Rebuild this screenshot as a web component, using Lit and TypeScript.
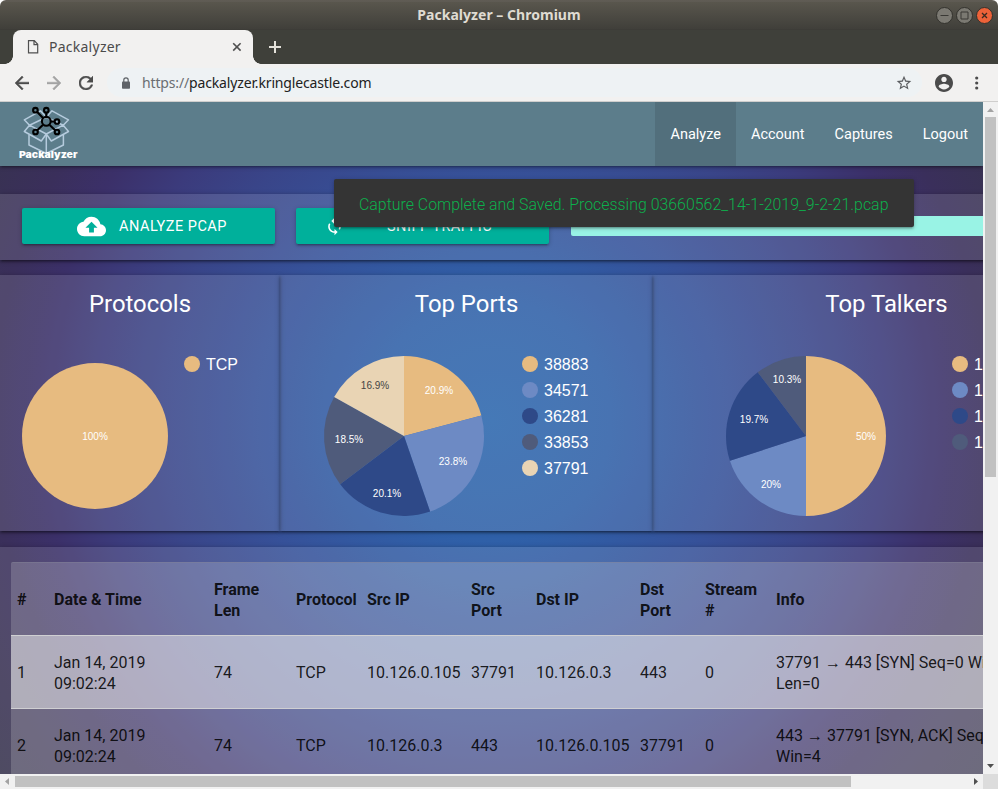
import { LitElement, html, svg, css } from "lit";
import { customElement, property } from "lit/decorators.js";

const GOLD = "#e7bb80";
const SKY = "#6d8ac4";
const NAVY = "#2e4988";
const SLATE = "#4f5b7b";
const SAND = "#e9d4b4";

interface Slice {
  name: string;
  value: number;
  color: string;
  label: string;
  x: number;
  y: number;
  dark?: boolean;
}

interface Chart {
  id: string;
  title: string;
  radius: number;
  slices: Slice[];
}

const CHARTS: Chart[] = [
  {
    id: "protocols",
    title: "Protocols",
    radius: 73,
    slices: [{ name: "TCP", value: 100, color: GOLD, label: "100%", x: 0, y: 0 }],
  },
  {
    id: "ports",
    title: "Top Ports",
    radius: 80,
    slices: [
      { name: "38883", value: 20.9, color: GOLD, label: "20.9%", x: 35, y: -46 },
      { name: "34571", value: 23.8, color: SKY, label: "23.8%", x: 49, y: 25 },
      { name: "36281", value: 20.0, color: NAVY, label: "20.1%", x: -17, y: 57 },
      { name: "33853", value: 18.4, color: SLATE, label: "18.5%", x: -55, y: 3 },
      { name: "37791", value: 16.9, color: SAND, label: "16.9%", x: -29, y: -51, dark: true },
    ],
  },
  {
    id: "talkers",
    title: "Top Talkers",
    radius: 80,
    slices: [
      { name: "10.126.0.3", value: 50, color: GOLD, label: "50%", x: 60, y: 0 },
      { name: "10.126.0.105", value: 20, color: SKY, label: "20%", x: -35, y: 48 },
      { name: "10.126.0.106", value: 19.7, color: NAVY, label: "19.7%", x: -52, y: -17 },
      { name: "10.126.0.104", value: 10.3, color: SLATE, label: "10.3%", x: -19, y: -57 },
    ],
  },
];

const HEADERS = ["#", "Date & Time", "Frame Len", "Protocol", "Src IP", "Src Port", "Dst IP", "Dst Port", "Stream #", "Info"];

const PACKETS = [
  ["1", "Jan 14, 2019 09:02:24", "74", "TCP", "10.126.0.105", "37791", "10.126.0.3", "443", "0", "37791 → 443 [SYN] Seq=0 Win=43690 Len=0"],
  ["2", "Jan 14, 2019 09:02:24", "74", "TCP", "10.126.0.3", "443", "10.126.0.105", "37791", "0", "443 → 37791 [SYN, ACK] Seq=0 Ack=1 Win=4"],
];

@customElement("pie-chart")
class PieChart extends LitElement {
  @property({ attribute: false }) chart!: Chart;

  static styles = css`
    :host { display: block; }
    .title {
      margin: 0;
      padding-top: 13px;
      font: 400 23.9px/32px Roboto, sans-serif;
      text-align: center;
      color: #fff;
    }
    .body { display: flex; align-items: flex-start; padding-top: 36px; }
    .body.protocols { padding-left: 22px; gap: 16px; }
    .body.ports { padding-left: 44px; gap: 38px; }
    .body.talkers { padding-left: 73px; gap: 66px; }
    .pie { display: block; flex: none; overflow: visible; }
    .protocols .pie { margin-top: 7px; }
    .label { font: 10px "Liberation Sans", sans-serif; fill: #fff; text-anchor: middle; }
    .label.dark { fill: #444; }
    .legend { margin: 0; padding: 0; list-style: none; }
    .entry {
      display: flex;
      align-items: center;
      gap: 6px;
      height: 16px;
      margin-bottom: 10px;
      font: 16px/18px "Liberation Sans", sans-serif;
      color: #fff;
      white-space: nowrap;
    }
    .name { padding-top: 2px; }
    .dot { flex: none; width: 16px; height: 16px; border-radius: 50%; }
  `;

  private wedges() {
    const { slices, radius: r } = this.chart;
    if (slices.length === 1) return svg`<circle r=${r} fill=${slices[0].color}></circle>`;
    const total = slices.reduce((sum, s) => sum + s.value, 0);
    let at = 0;
    return slices.map((s) => {
      const a = (at / total) * Math.PI * 2;
      at += s.value;
      const b = (at / total) * Math.PI * 2;
      const big = b - a > Math.PI ? 1 : 0;
      const d = `M0 0L${r * Math.sin(a)} ${-r * Math.cos(a)}A${r} ${r} 0 ${big} 1 ${r * Math.sin(b)} ${-r * Math.cos(b)}Z`;
      return svg`<path d=${d} fill=${s.color}></path>`;
    });
  }

  render() {
    const { id, title, radius: r, slices } = this.chart;
    return html`
      <h5 class="title">${title}</h5>
      <div class="body ${id}">
        <svg class="pie" width=${r * 2} height=${r * 2} viewBox="${-r} ${-r} ${r * 2} ${r * 2}">
          ${this.wedges()}
          ${slices.map((s) => svg`<text class="label ${s.dark ? "dark" : ""}" x=${s.x} y=${s.y + 3.6}>${s.label}</text>`)}
        </svg>
        <ul class="legend">
          ${slices.map((s) => html`<li class="entry"><span class="dot" style="background:${s.color}"></span><span class="name">${s.name}</span></li>`)}
        </ul>
      </div>
    `;
  }
}

@customElement("app-root")
class AppRoot extends LitElement {
  static styles = css`
    :host { display: block; width: 998px; height: 789px; overflow: hidden; background: #fff; }
    .window { display: flex; flex-direction: column; height: 100%; }

    .titlebar {
      display: grid;
      grid-template-columns: 1fr auto 1fr;
      align-items: center;
      height: 30px;
      box-sizing: border-box;
      border-radius: 6px 6px 0 0;
      background: linear-gradient(#5b574e 0, #64605a 1px, #59564d 2px, #403f3a 29px, #3a3935 30px);
      color: #dfdbd2;
    }
    .caption { grid-column: 2; font: 700 14px/30px "Noto Sans", sans-serif; letter-spacing: 0.03px; }
    .controls { display: flex; justify-content: flex-end; gap: 3px; padding-right: 5px; }
    .control { display: block; width: 17px; height: 17px; }

    .tabs { display: flex; height: 34px; padding-left: 13px; background: #3f403a; }
    .tab {
      position: relative;
      display: flex;
      align-items: center;
      width: 240px;
      height: 34px;
      box-sizing: border-box;
      padding: 0 10px 0 14px;
      border-radius: 8px 8px 0 0;
      background: #f2f1f0;
      color: #4b4b4b;
      font: 14px/34px "Noto Sans", sans-serif;
    }
    .tab::before, .tab::after { content: ""; position: absolute; bottom: 0; width: 8px; height: 8px; }
    .tab::before { left: -8px; background: radial-gradient(circle at 0 0, transparent 7.5px, #f2f1f0 8px); }
    .tab::after { right: -8px; background: radial-gradient(circle at 100% 0, transparent 7.5px, #f2f1f0 8px); }
    .tab-name { flex: 1; padding-left: 10px; letter-spacing: 0.25px; }
    .new-tab { margin: 11px 0 0 16px; }

    .toolbar {
      display: flex;
      align-items: center;
      height: 38px;
      box-sizing: border-box;
      padding-left: 15px;
      border-bottom: 1px solid #cfcecd;
      background: #f2f1f0;
    }
    .tool { flex: none; display: block; margin-right: 18px; }
    .omnibox {
      display: flex;
      align-items: center;
      width: 815px;
      height: 29px;
      margin-left: -4px;
      box-sizing: border-box;
      padding: 0 10px 0 14px;
      border-radius: 15px;
      background: #eef2f4;
      font: 14px/28px "Noto Sans", sans-serif;
      letter-spacing: -0.15px;
      color: #212121;
    }
    .url { flex: 1; padding-left: 11px; }
    .scheme { color: #6a6e72; }
    .avatar { margin-left: 13px; margin-right: 22px; }

    .frame { display: grid; grid-template-columns: 983px 15px; grid-template-rows: 672px 15px; height: 687px; }
    .page {
      position: relative;
      overflow: hidden;
      font-family: Roboto, sans-serif;
      background: radial-gradient(circle at 491px 318px, #2c67ad 0, #2f60a8 120px, #365199 240px, #394589 330px, #3b3b7c 390px, #3b3069 450px, #3a2f5b 500px, #383252 560px, #353449 640px);
    }
    .nav {
      position: relative;
      display: flex;
      align-items: flex-start;
      height: 64px;
      background: #5c7d8b;
      box-shadow: 0 2px 2px 0 rgba(0,0,0,.14), 0 3px 1px -2px rgba(0,0,0,.12), 0 1px 5px 0 rgba(0,0,0,.2);
    }
    .logo { display: block; margin-left: 14px; margin-right: auto; }
    .wordmark { font: 900 9.6px Inter, sans-serif; fill: #fff; }
    .link { height: 64px; box-sizing: border-box; padding: 1px 15px 0; font-size: 14.5px; line-height: 64px; color: #fff; }
    .link.active { background: #526f7c; }

    .panel {
      width: 1120px;
      box-sizing: border-box;
      background: rgba(255,255,255,.12);
      box-shadow: 0 2px 2px 0 rgba(0,0,0,.24), 0 3px 1px -2px rgba(0,0,0,.12), 0 1px 5px 0 rgba(0,0,0,.3);
    }
    .actions { display: flex; align-items: center; height: 66px; margin-top: 28px; padding-left: 22px; gap: 21px; }
    .button {
      display: flex;
      align-items: center;
      width: 253px;
      height: 36px;
      box-sizing: border-box;
      margin-top: -2px;
      border-radius: 2px;
      background: #00b09b;
      box-shadow: 0 2px 2px 0 rgba(0,0,0,.14), 0 3px 1px -2px rgba(0,0,0,.12), 0 1px 5px 0 rgba(0,0,0,.2);
      color: #fff;
      font-size: 14.5px;
      line-height: 34px;
      letter-spacing: .5px;
    }
    .button.analyze { padding-left: 55px; gap: 13px; }
    .button.sniff { padding-left: 29px; gap: 43px; }
    .caps { padding-top: 2px; }
    .progress { flex: 1; height: 20px; margin: -2px 0 0 1px; border-radius: 2px; background: #99f3e5; }

    .charts { display: grid; grid-template-columns: 280px 373px 467px; width: 1120px; height: 256px; margin-top: 15px; }
    .chart {
      background: rgba(255,255,255,.12);
      box-shadow: 0 2px 2px 0 rgba(0,0,0,.24), 0 3px 1px -2px rgba(0,0,0,.12), 0 1px 5px 0 rgba(0,0,0,.3);
    }

    .capture { height: 400px; margin-top: 16px; padding: 15px 11px; }
    .table {
      box-sizing: border-box;
      border-top: 1px solid rgba(130,130,150,.45);
      border-radius: 2px;
      background: rgba(235,235,235,.2);
      height: 360px;
      color: rgba(0,0,0,.87);
      font-size: 16px;
      line-height: 21px;
    }
    .row {
      display: grid;
      grid-template-columns: 38px 160px 82px 71px 104px 65px 104px 65px 71px 1fr;
      align-items: center;
      height: 73px;
      box-sizing: border-box;
      border-bottom: 1px solid #cfcfd2;
    }
    .row.head { font-weight: 700; }
    .row.odd { background: rgba(242,242,242,.5); }
    .cell { padding: 1px 5px 0; }
    .cell:first-child { padding-left: 6px; }
    .cell.date { max-width: 110px; }
    .cell.short { padding-right: 12px; }
    .cell.info { width: 278px; }

    .toast {
      position: absolute;
      left: 334px;
      top: 77px;
      width: 580px;
      height: 48px;
      box-sizing: border-box;
      padding-left: 25px;
      border-radius: 2px;
      background: #343434;
      box-shadow: 0 2px 2px 0 rgba(0,0,0,.14), 0 3px 1px -2px rgba(0,0,0,.12), 0 1px 5px 0 rgba(0,0,0,.2);
      color: #0cb04c;
      font-size: 15.92px;
      font-weight: 300;
      line-height: 52px;
      white-space: nowrap;
    }

    .vbar { display: flex; flex-direction: column; background: #f1f1f1; }
    .vthumb { width: 11px; height: 360px; margin-left: 2px; background: #c1c1c1; }
    .vbar .last { margin-top: auto; }
    .hbar { display: flex; align-items: center; background: #f1f1f1; }
    .hthumb { width: 836px; height: 11px; background: #c1c1c1; }
    .hbar .last { margin-left: auto; }
    .arrow { display: block; flex: none; }
    .corner { background: #dcdcdc; }
  `;

  private cell(text: string, i: number) {
    const kind = i === 1 ? "date" : i === 9 ? "info" : [2, 5, 7, 8].includes(i) ? "short" : "";
    return html`<div class="cell ${kind}" role="cell">${text}</div>`;
  }

  private arrow(points: string, color: string, extra = "") {
    return html`<svg class="arrow ${extra}" width="15" height="15"><polygon points=${points} fill=${color}></polygon></svg>`;
  }

  private logo() {
    return html`
      <svg class="logo" width="70" height="62" viewBox="14 102 70 62">
        <g fill="none" stroke="#b5cbdd" stroke-width="1.5" stroke-linejoin="round">
          <path d="M46.3 117.3L40.5 110.8L24.3 119.8L29.5 125.2ZM46.3 117.3L52 110.8L68.5 119.8L63.2 125.2Z"></path>
          <path d="M29.5 125.2L24.3 131.5L41.3 141L46.3 134L29.5 125.2M63.2 125.2L68.5 131.5L51.3 141L46.3 134L63.2 125.2"></path>
          <path d="M29 134.5V145L46.3 153.5L63.4 145V134.5M46.3 134V153.5"></path>
        </g>
        <g fill="none" stroke="#000" stroke-width="2.1">
          <path d="M37 111.8L43 118M46.3 112.5V116.5M51 121.5H54.5M42.8 125L37 130.5M49.6 125L55.4 130.5"></path>
          <circle cx="46.3" cy="121.3" r="4.4"></circle>
          <circle cx="35.4" cy="110.2" r="2.3"></circle>
          <circle cx="46.3" cy="110.2" r="2.3"></circle>
          <circle cx="57" cy="121.5" r="2.3"></circle>
          <circle cx="35.5" cy="132" r="2.3"></circle>
          <circle cx="57" cy="132" r="2.3"></circle>
        </g>
        <text class="wordmark" x="19" y="157.5" textLength="58.5" lengthAdjust="spacingAndGlyphs">Packalyzer</text>
      </svg>
    `;
  }

  render() {
    return html`
      <div class="window">
        <header class="titlebar">
          <div class="caption">Packalyzer – Chromium</div>
          <div class="controls">
            <svg class="control" viewBox="0 0 17 17">
              <circle cx="8.5" cy="8.5" r="8" fill="#7b7972" stroke="#33322d"></circle><path d="M4.5 8.5h8" stroke="#3a3935"></path>
            </svg>
            <svg class="control" viewBox="0 0 17 17">
              <circle cx="8.5" cy="8.5" r="8" fill="#7b7972" stroke="#33322d"></circle><path d="M5 5h7v7h-7z" fill="none" stroke="#3a3935"></path>
            </svg>
            <svg class="control" viewBox="0 0 17 17">
              <circle cx="8.5" cy="8.5" r="8" fill="#ed6239" stroke="#33322d"></circle><path d="M6 6l5 5M11 6l-5 5" stroke="#3a2a20" stroke-width="1.3"></path>
            </svg>
          </div>
        </header>

        <div class="tabs">
          <div class="tab">
            <svg width="12" height="16" viewBox="0 0 12 16" fill="none" stroke="#505050" stroke-width="1.2">
              <path d="M1.5 1.6h5.8l3.4 3.7v8.6H1.5zM7 1.6v4h3.7"></path>
            </svg>
            <span class="tab-name">Packalyzer</span>
            <svg width="12" height="12" viewBox="0 0 12 12" stroke="#505050" stroke-width="1.6"><path d="M2.2 2.2l7.4 7.4M9.6 2.2L2.2 9.6"></path></svg>
          </div>
          <svg class="new-tab" width="12" height="12" viewBox="0 0 12 12" stroke="#e4e2da" stroke-width="2"><path d="M6 0v12M0 6h12"></path></svg>
        </div>

        <div class="toolbar">
          <svg class="tool" width="14" height="14" viewBox="4 4 16 16" fill="#4c4c4c" stroke="#4c4c4c" stroke-width=".5"><path d="M20 11H7.83l5.59-5.59L12 4l-8 8 8 8 1.41-1.41L7.83 13H20v-2z"></path></svg>
          <svg class="tool" width="14" height="14" viewBox="4 4 16 16" fill="#a3a3a3" stroke="#a3a3a3" stroke-width=".5"><path d="M12 4l-1.41 1.41L16.17 11H4v2h12.17l-5.58 5.59L12 20l8-8z"></path></svg>
          <svg class="tool" width="14" height="14" viewBox="4 4 16 16" fill="#4c4c4c" stroke="#4c4c4c" stroke-width=".5"><path d="M17.65 6.35A7.958 7.958 0 0 0 12 4c-4.42 0-7.99 3.58-7.99 8s3.57 8 7.99 8c3.73 0 6.84-2.55 7.73-6h-2.08A5.99 5.99 0 0 1 12 18c-3.31 0-6-2.69-6-6s2.69-6 6-6c1.66 0 3.14.69 4.22 1.78L13 11h7V4l-2.35 2.35z"></path></svg>
          <div class="omnibox">
            <svg width="10" height="12" viewBox="0 0 10 12"><rect x="1" y="4.5" width="8" height="7.2" rx=".8" fill="#5f6368"></rect><path d="M2.8 5V3a2.2 2.2 0 0 1 4.4 0v2" fill="none" stroke="#5f6368" stroke-width="1.2"></path></svg>
            <span class="url"><span class="scheme">https://</span>packalyzer.kringlecastle.com</span>
            <svg width="16" height="16" viewBox="1 1 22 22" fill="#5b5d60"><path d="M22 9.24l-7.19-.62L12 2 9.19 8.63 2 9.24l5.46 4.73L5.82 21 12 17.27 18.18 21l-1.63-7.03L22 9.24zM12 15.4l-3.76 2.27 1-4.28-3.32-2.88 4.38-.38L12 6.1l1.71 4.04 4.38.38-3.32 2.88 1 4.28L12 15.4z"></path></svg>
          </div>
          <svg class="avatar" width="18" height="18" viewBox="2 2 20 20" fill="#4b4b4b"><path d="M12 2C6.48 2 2 6.48 2 12s4.48 10 10 10 10-4.48 10-10S17.52 2 12 2zm0 3c1.66 0 3 1.34 3 3s-1.34 3-3 3-3-1.34-3-3 1.34-3 3-3zm0 14.2c-2.5 0-4.71-1.28-6-3.22.03-1.99 4-3.08 6-3.08 1.99 0 5.97 1.09 6 3.08-1.29 1.94-3.5 3.22-6 3.22z"></path></svg>
          <svg width="4" height="14" viewBox="0 0 4 14" fill="#4b4b4b"><circle cx="1.7" cy="2" r="1.6"></circle><circle cx="1.7" cy="7" r="1.6"></circle><circle cx="1.7" cy="12" r="1.6"></circle></svg>
        </div>

        <div class="frame">
          <main class="page">
            <nav class="nav">
              ${this.logo()}
              <a class="link active">Analyze</a>
              <a class="link">Account</a>
              <a class="link">Captures</a>
              <a class="link">Logout</a>
            </nav>

            <section class="panel actions">
              <div class="button analyze" role="button">
                <svg width="29" height="29" viewBox="0 0 24 24" fill="#fff"><path d="M19.35 10.04C18.67 6.59 15.64 4 12 4 9.11 4 6.6 5.64 5.35 8.04 2.34 8.36 0 10.91 0 14c0 3.31 2.69 6 6 6h13c2.76 0 5-2.24 5-5 0-2.64-2.05-4.78-4.65-4.96zM14 13v4h-4v-4H7l5-5 5 5h-3z"></path></svg>
                <span class="caps">ANALYZE PCAP</span>
              </div>
              <div class="button sniff" role="button">
                <svg width="19" height="19" viewBox="0 0 24 24" fill="#fff"><path d="M12 4V1L8 5l4 4V6c3.31 0 6 2.69 6 6 0 1.01-.25 1.97-.7 2.8l1.46 1.46A7.93 7.93 0 0 0 20 12c0-4.42-3.58-8-8-8zm0 14c-3.31 0-6-2.69-6-6 0-1.01.25-1.97.7-2.8L5.24 7.74A7.93 7.93 0 0 0 4 12c0 4.42 3.58 8 8 8v3l4-4-4-4v3z"></path></svg>
                <span class="caps">SNIFF TRAFFIC</span>
              </div>
              <div class="progress"></div>
            </section>

            <section class="charts">
              ${CHARTS.map((chart) => html`<pie-chart class="chart" .chart=${chart}></pie-chart>`)}
            </section>

            <section class="panel capture">
              <div class="table" role="table">
                <div class="row head" role="row">${HEADERS.map((h, i) => this.cell(h, i))}</div>
                ${PACKETS.map((p, n) => html`<div class="row ${n % 2 ? "" : "odd"}" role="row">${p.map((v, i) => this.cell(v, i))}</div>`)}
              </div>
            </section>

            <div class="toast" role="status">Capture Complete and Saved. Processing 03660562_14-1-2019_9-2-21.pcap</div>
          </main>

          <div class="vbar">
            ${this.arrow("4,10 7.5,6 11,10", "#a3a3a3")}
            <div class="vthumb"></div>
            ${this.arrow("4,5 11,5 7.5,9", "#505050", "last")}
          </div>
          <div class="hbar">
            ${this.arrow("9,4 9,11 5,7.5", "#a3a3a3")}
            <div class="hthumb"></div>
            ${this.arrow("6,4 6,11 10,7.5", "#505050", "last")}
          </div>
          <div class="corner"></div>
        </div>
      </div>
    `;
  }
}
